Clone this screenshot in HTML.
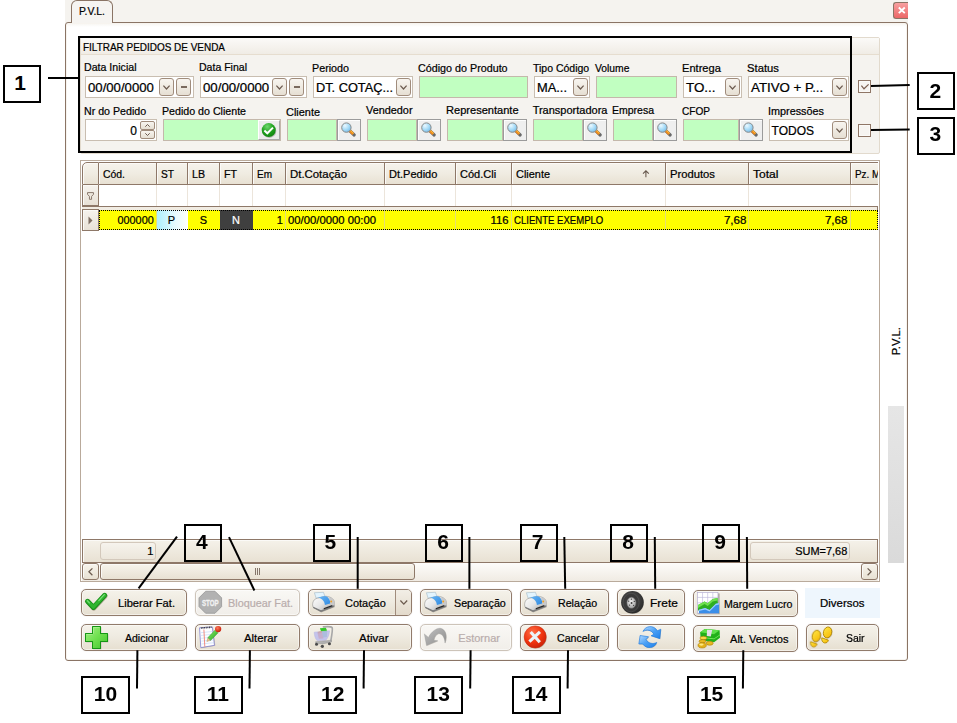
<!DOCTYPE html>
<html><head><meta charset="utf-8"><title>P.V.L.</title>
<style>

html,body{margin:0;padding:0}
body{width:957px;height:723px;position:relative;overflow:hidden;background:#fff;font-family:"Liberation Sans",sans-serif;font-size:11px;color:#000}
div{box-sizing:border-box}
.t{margin:0;padding:0;-webkit-text-stroke:.22px currentColor}
.inp{position:absolute;background:#fff;border:1px solid #c9beb1}
.grn{position:absolute;background:#c1ffc1;border:1px solid #c4b8ab}
.sb{position:absolute;border:1px solid #a08c7c;border-radius:3px;background:linear-gradient(#f8f5f0,#e6dfd3)}
.lk{position:absolute;background:#efefef;border:1px solid #9b9b9b;box-shadow:inset 1px 1px 0 #fdfdfd}
.lk2{position:absolute;background:#ececec;border:1px solid #fff;border-right-color:#a9a9a9;border-bottom-color:#a9a9a9}
.btn{position:absolute;border:1px solid #917b6b;border-radius:5px;background:linear-gradient(#f5f2ea 0%,#efebe1 45%,#e6dfd0 100%);box-shadow:inset 0 0 0 1px rgba(255,255,255,.5),0 0 1px rgba(120,100,85,.35)}
.btn.dis{border-color:#cdc4b9;background:linear-gradient(#f9f8f5,#f1eee9)}
.co{position:absolute;border:2px solid #000}
.hc{position:absolute;top:0;height:23px;border:1px solid #8e7868;border-left:none;background:linear-gradient(#f6f3ec 0%,#f0ece2 50%,#e8e1d3 100%);box-shadow:inset 1px 1px 0 #fbfaf7}
svg{position:absolute;overflow:visible}

</style></head>
<body>
<div style="position:absolute;left:65px;top:0px;width:843px;height:23px;background:#f5f3ef"></div>
<div style="position:absolute;left:65px;top:22px;width:843px;height:639px;border:1px solid #8a7465;border-radius:3px;background:linear-gradient(#f6f4f0 0px,#fff 4px);box-shadow:inset 0 0 0 1px #f7f4ef"></div>
<div style="position:absolute;left:71px;top:0px;width:42px;height:23px;border:1px solid #8a7465;border-bottom:none;border-radius:6px 6px 0 0;background:#f6f4f1"></div>
<div class="t" style="position:absolute;top:3.39px;line-height:16px;font-size:11px;white-space:pre;color:#000;left:78.65px;transform-origin:0 50%;transform:scaleX(0.9438);">P.V.L.</div>
<div style="position:absolute;left:893px;top:2px;width:16px;height:17px;border:1px solid #8a7465;border-right:none;border-radius:3px 0 0 3px;background:linear-gradient(#f7a0a0,#ec6666)"></div>
<svg style="left:897.5px;top:6.8px" width="7.6" height="6.6" viewBox="0 0 7.6 6.6"><path d="M0.8 0.5 L6.8 6.1 M6.8 0.5 L0.8 6.1" stroke="#fff" stroke-width="1.9" fill="none"/></svg>
<div style="position:absolute;left:908px;top:0px;width:49px;height:23px;background:#fff"></div>
<div style="position:absolute;left:80px;top:37px;width:800px;height:117px;background:#f5f3ef;border:1px solid #e2dacd;border-radius:2px"></div>
<div style="position:absolute;left:81px;top:38px;width:798px;height:17px;background:linear-gradient(#fbfaf8,#f0ece5);border-bottom:1px solid #e6ddcf"></div>
<div class="t" style="position:absolute;top:39.19px;line-height:16px;font-size:11px;white-space:pre;color:#000;left:83.05px;transform-origin:0 50%;transform:scaleX(0.9051);">FILTRAR PEDIDOS DE VENDA</div>
<div class="t" style="position:absolute;top:58.99px;line-height:16px;font-size:11px;white-space:pre;color:#000;left:83.85px;transform-origin:0 50%;transform:scaleX(0.9647);">Data Inicial</div>
<div class="inp" style="left:85px;top:76px;width:109px;height:22px"></div>
<div class="t" style="position:absolute;top:80.24px;line-height:16px;font-size:12px;white-space:pre;color:#000;left:88.18px;transform-origin:0 50%;transform:scaleX(1.0961);">00/00/0000</div>
<div class="sb" style="left:159px;top:78px;width:15px;height:18px"><svg style="left:3px;top:6px" width="7" height="5" viewBox="0 0 7 5"><path d="M0.4 0.6 L3.5 4 L6.6 0.6" stroke="#6b5a4e" stroke-width="1.2" fill="none"/></svg></div>
<div class="sb" style="left:176px;top:78px;width:15px;height:18px"><div style="position:absolute;left:4px;top:7px;width:6px;height:2px;background:#7a6a5e"></div></div>
<div class="t" style="position:absolute;top:58.99px;line-height:16px;font-size:11px;white-space:pre;color:#000;left:199.05px;transform-origin:0 50%;transform:scaleX(0.9573);">Data Final</div>
<div class="inp" style="left:200px;top:76px;width:107px;height:22px"></div>
<div class="t" style="position:absolute;top:80.24px;line-height:16px;font-size:12px;white-space:pre;color:#000;left:202.88px;transform-origin:0 50%;transform:scaleX(1.1028);">00/00/0000</div>
<div class="sb" style="left:272px;top:78px;width:15px;height:18px"><svg style="left:3px;top:6px" width="7" height="5" viewBox="0 0 7 5"><path d="M0.4 0.6 L3.5 4 L6.6 0.6" stroke="#6b5a4e" stroke-width="1.2" fill="none"/></svg></div>
<div class="sb" style="left:289px;top:78px;width:15px;height:18px"><div style="position:absolute;left:4px;top:7px;width:6px;height:2px;background:#7a6a5e"></div></div>
<div class="t" style="position:absolute;top:59.89px;line-height:16px;font-size:11px;white-space:pre;color:#000;left:312.25px;transform-origin:0 50%;transform:scaleX(0.9757);">Periodo</div>
<div class="inp" style="left:313px;top:76px;width:100px;height:22px"></div>
<div class="t" style="position:absolute;top:80.24px;line-height:16px;font-size:12px;white-space:pre;color:#000;left:315.68px;transform-origin:0 50%;transform:scaleX(1.0646);">DT. COTAÇ...</div>
<div class="sb" style="left:396px;top:78px;width:15px;height:18px"><svg style="left:3px;top:6px" width="7" height="5" viewBox="0 0 7 5"><path d="M0.4 0.6 L3.5 4 L6.6 0.6" stroke="#6b5a4e" stroke-width="1.2" fill="none"/></svg></div>
<div class="t" style="position:absolute;top:59.89px;line-height:16px;font-size:11px;white-space:pre;color:#000;left:418.15px;transform-origin:0 50%;transform:scaleX(0.9767);">Código do Produto</div>
<div class="grn" style="left:419px;top:76px;width:109px;height:22px"></div>
<div class="t" style="position:absolute;top:59.89px;line-height:16px;font-size:11px;white-space:pre;color:#000;left:533.45px;transform-origin:0 50%;transform:scaleX(0.9541);">Tipo Código</div>
<div class="inp" style="left:534px;top:76px;width:56px;height:22px"></div>
<div class="t" style="position:absolute;top:80.24px;line-height:16px;font-size:12px;white-space:pre;color:#000;left:536.78px;transform-origin:0 50%;transform:scaleX(1.0721);">MA...</div>
<div class="sb" style="left:573px;top:78px;width:15px;height:18px"><svg style="left:3px;top:6px" width="7" height="5" viewBox="0 0 7 5"><path d="M0.4 0.6 L3.5 4 L6.6 0.6" stroke="#6b5a4e" stroke-width="1.2" fill="none"/></svg></div>
<div class="t" style="position:absolute;top:59.89px;line-height:16px;font-size:11px;white-space:pre;color:#000;left:595.35px;transform-origin:0 50%;transform:scaleX(0.9372);">Volume</div>
<div class="grn" style="left:596px;top:76px;width:81px;height:22px"></div>
<div class="t" style="position:absolute;top:59.89px;line-height:16px;font-size:11px;white-space:pre;color:#000;left:681.85px;transform-origin:0 50%;transform:scaleX(1.0070);">Entrega</div>
<div class="inp" style="left:683px;top:76px;width:59px;height:22px"></div>
<div class="t" style="position:absolute;top:80.24px;line-height:16px;font-size:12px;white-space:pre;color:#000;left:685.58px;transform-origin:0 50%;transform:scaleX(1.1166);">TO...</div>
<div class="sb" style="left:725px;top:78px;width:15px;height:18px"><svg style="left:3px;top:6px" width="7" height="5" viewBox="0 0 7 5"><path d="M0.4 0.6 L3.5 4 L6.6 0.6" stroke="#6b5a4e" stroke-width="1.2" fill="none"/></svg></div>
<div class="t" style="position:absolute;top:59.89px;line-height:16px;font-size:11px;white-space:pre;color:#000;left:747.05px;transform-origin:0 50%;transform:scaleX(1.0228);">Status</div>
<div class="inp" style="left:748px;top:76px;width:101px;height:22px"></div>
<div class="t" style="position:absolute;top:80.24px;line-height:16px;font-size:12px;white-space:pre;color:#000;left:750.88px;transform-origin:0 50%;transform:scaleX(1.1071);">ATIVO + P...</div>
<div class="sb" style="left:832px;top:78px;width:15px;height:18px"><svg style="left:3px;top:6px" width="7" height="5" viewBox="0 0 7 5"><path d="M0.4 0.6 L3.5 4 L6.6 0.6" stroke="#6b5a4e" stroke-width="1.2" fill="none"/></svg></div>
<div class="t" style="position:absolute;top:102.99px;line-height:16px;font-size:11px;white-space:pre;color:#000;left:83.85px;transform-origin:0 50%;transform:scaleX(0.9670);">Nr do Pedido</div>
<div class="inp" style="left:85px;top:119px;width:72px;height:22px"></div>
<div class="t" style="position:absolute;top:123.04px;line-height:16px;font-size:12px;white-space:pre;color:#000;right:819.98px;transform-origin:100% 50%;">0</div>
<div class="sb" style="left:140px;top:121px;width:15px;height:9px;border-radius:2px"><svg style="left:4px;top:2px" width="5" height="3" viewBox="0 0 5 3"><path d="M0.3 2.7 L2.5 0.5 L4.7 2.7" stroke="#6b5a4e" stroke-width="1" fill="none"/></svg></div>
<div class="sb" style="left:140px;top:130px;width:15px;height:9px;border-radius:2px"><svg style="left:4px;top:2px" width="5" height="3" viewBox="0 0 5 3"><path d="M0.3 0.3 L2.5 2.5 L4.7 0.3" stroke="#6b5a4e" stroke-width="1" fill="none"/></svg></div>
<div class="t" style="position:absolute;top:102.99px;line-height:16px;font-size:11px;white-space:pre;color:#000;left:161.95px;transform-origin:0 50%;transform:scaleX(0.9673);">Pedido do Cliente</div>
<div class="grn" style="left:163px;top:119px;width:118px;height:22px"></div>
<div class="lk2" style="left:258px;top:120px;width:22px;height:20px"><svg style="left:1.5px;top:0.5px" width="16" height="17" viewBox="0 0 16 17"><defs><radialGradient id="gk" cx="40%" cy="25%" r="80%"><stop offset="0" stop-color="#6fd86f"/><stop offset=".5" stop-color="#22a422"/><stop offset="1" stop-color="#0e820e"/></radialGradient></defs><circle cx="8.3" cy="8.9" r="7" fill="#777" opacity=".45"/><circle cx="7.7" cy="8.1" r="7" fill="url(#gk)"/><path d="M3.4 8.6 L6.3 11.3 L12 5.6" stroke="#fff" stroke-width="2" fill="none" stroke-linejoin="miter"/></svg></div>
<div class="t" style="position:absolute;top:104.09px;line-height:16px;font-size:11px;white-space:pre;color:#000;left:286.25px;transform-origin:0 50%;transform:scaleX(0.9927);">Cliente</div>
<div class="grn" style="left:287px;top:119px;width:50px;height:22px"></div>
<div class="lk" style="left:337px;top:119px;width:24px;height:22px"><svg style="left:3px;top:2px" width="17" height="17" viewBox="0 0 17 17"><defs><radialGradient id="mg" cx="35%" cy="30%" r="75%"><stop offset="0" stop-color="#eaf8ff"/><stop offset=".55" stop-color="#a8dcf8"/><stop offset="1" stop-color="#78bce8"/></radialGradient></defs><path d="M8.6 8.6 L13.2 13" stroke="#6a6a6a" stroke-width="3.2" stroke-linecap="round"/><path d="M8.3 8.3 L12.2 12" stroke="#f08a1c" stroke-width="2.6"/><path d="M8.9 7.8 L12.6 11.4" stroke="#ffd24a" stroke-width=".8"/><circle cx="5.4" cy="5.6" r="4.7" fill="url(#mg)" stroke="#8a8a8a" stroke-width="1"/></svg></div>
<div class="t" style="position:absolute;top:102.09px;line-height:16px;font-size:11px;white-space:pre;color:#000;left:366.25px;transform-origin:0 50%;transform:scaleX(0.9871);">Vendedor</div>
<div class="grn" style="left:367px;top:119px;width:50px;height:22px"></div>
<div class="lk" style="left:417px;top:119px;width:24px;height:22px"><svg style="left:3px;top:2px" width="17" height="17" viewBox="0 0 17 17"><defs><radialGradient id="mg" cx="35%" cy="30%" r="75%"><stop offset="0" stop-color="#eaf8ff"/><stop offset=".55" stop-color="#a8dcf8"/><stop offset="1" stop-color="#78bce8"/></radialGradient></defs><path d="M8.6 8.6 L13.2 13" stroke="#6a6a6a" stroke-width="3.2" stroke-linecap="round"/><path d="M8.3 8.3 L12.2 12" stroke="#f08a1c" stroke-width="2.6"/><path d="M8.9 7.8 L12.6 11.4" stroke="#ffd24a" stroke-width=".8"/><circle cx="5.4" cy="5.6" r="4.7" fill="url(#mg)" stroke="#8a8a8a" stroke-width="1"/></svg></div>
<div class="t" style="position:absolute;top:102.09px;line-height:16px;font-size:11px;white-space:pre;color:#000;left:446.05px;transform-origin:0 50%;transform:scaleX(1.0059);">Representante</div>
<div class="grn" style="left:447px;top:119px;width:56px;height:22px"></div>
<div class="lk" style="left:503px;top:119px;width:24px;height:22px"><svg style="left:3px;top:2px" width="17" height="17" viewBox="0 0 17 17"><defs><radialGradient id="mg" cx="35%" cy="30%" r="75%"><stop offset="0" stop-color="#eaf8ff"/><stop offset=".55" stop-color="#a8dcf8"/><stop offset="1" stop-color="#78bce8"/></radialGradient></defs><path d="M8.6 8.6 L13.2 13" stroke="#6a6a6a" stroke-width="3.2" stroke-linecap="round"/><path d="M8.3 8.3 L12.2 12" stroke="#f08a1c" stroke-width="2.6"/><path d="M8.9 7.8 L12.6 11.4" stroke="#ffd24a" stroke-width=".8"/><circle cx="5.4" cy="5.6" r="4.7" fill="url(#mg)" stroke="#8a8a8a" stroke-width="1"/></svg></div>
<div class="t" style="position:absolute;top:102.09px;line-height:16px;font-size:11px;white-space:pre;color:#000;left:532.65px;transform-origin:0 50%;">Transportadora</div>
<div class="grn" style="left:533px;top:119px;width:50px;height:22px"></div>
<div class="lk" style="left:583px;top:119px;width:24px;height:22px"><svg style="left:3px;top:2px" width="17" height="17" viewBox="0 0 17 17"><defs><radialGradient id="mg" cx="35%" cy="30%" r="75%"><stop offset="0" stop-color="#eaf8ff"/><stop offset=".55" stop-color="#a8dcf8"/><stop offset="1" stop-color="#78bce8"/></radialGradient></defs><path d="M8.6 8.6 L13.2 13" stroke="#6a6a6a" stroke-width="3.2" stroke-linecap="round"/><path d="M8.3 8.3 L12.2 12" stroke="#f08a1c" stroke-width="2.6"/><path d="M8.9 7.8 L12.6 11.4" stroke="#ffd24a" stroke-width=".8"/><circle cx="5.4" cy="5.6" r="4.7" fill="url(#mg)" stroke="#8a8a8a" stroke-width="1"/></svg></div>
<div class="t" style="position:absolute;top:102.09px;line-height:16px;font-size:11px;white-space:pre;color:#000;left:612.05px;transform-origin:0 50%;transform:scaleX(0.9539);">Empresa</div>
<div class="grn" style="left:613px;top:119px;width:40px;height:22px"></div>
<div class="lk" style="left:653px;top:119px;width:24px;height:22px"><svg style="left:3px;top:2px" width="17" height="17" viewBox="0 0 17 17"><defs><radialGradient id="mg" cx="35%" cy="30%" r="75%"><stop offset="0" stop-color="#eaf8ff"/><stop offset=".55" stop-color="#a8dcf8"/><stop offset="1" stop-color="#78bce8"/></radialGradient></defs><path d="M8.6 8.6 L13.2 13" stroke="#6a6a6a" stroke-width="3.2" stroke-linecap="round"/><path d="M8.3 8.3 L12.2 12" stroke="#f08a1c" stroke-width="2.6"/><path d="M8.9 7.8 L12.6 11.4" stroke="#ffd24a" stroke-width=".8"/><circle cx="5.4" cy="5.6" r="4.7" fill="url(#mg)" stroke="#8a8a8a" stroke-width="1"/></svg></div>
<div class="t" style="position:absolute;top:102.99px;line-height:16px;font-size:11px;white-space:pre;color:#000;left:682.15px;transform-origin:0 50%;transform:scaleX(0.9162);">CFOP</div>
<div class="grn" style="left:683px;top:119px;width:56px;height:22px"></div>
<div class="lk" style="left:739px;top:119px;width:24px;height:22px"><svg style="left:3px;top:2px" width="17" height="17" viewBox="0 0 17 17"><defs><radialGradient id="mg" cx="35%" cy="30%" r="75%"><stop offset="0" stop-color="#eaf8ff"/><stop offset=".55" stop-color="#a8dcf8"/><stop offset="1" stop-color="#78bce8"/></radialGradient></defs><path d="M8.6 8.6 L13.2 13" stroke="#6a6a6a" stroke-width="3.2" stroke-linecap="round"/><path d="M8.3 8.3 L12.2 12" stroke="#f08a1c" stroke-width="2.6"/><path d="M8.9 7.8 L12.6 11.4" stroke="#ffd24a" stroke-width=".8"/><circle cx="5.4" cy="5.6" r="4.7" fill="url(#mg)" stroke="#8a8a8a" stroke-width="1"/></svg></div>
<div class="t" style="position:absolute;top:102.99px;line-height:16px;font-size:11px;white-space:pre;color:#000;left:768.25px;transform-origin:0 50%;transform:scaleX(0.9831);">Impressões</div>
<div class="inp" style="left:769px;top:119px;width:80px;height:22px"></div>
<div class="t" style="position:absolute;top:123.04px;line-height:16px;font-size:12px;white-space:pre;color:#000;left:771.58px;transform-origin:0 50%;">TODOS</div>
<div class="sb" style="left:832px;top:121px;width:15px;height:18px"><svg style="left:3px;top:6px" width="7" height="5" viewBox="0 0 7 5"><path d="M0.4 0.6 L3.5 4 L6.6 0.6" stroke="#6b5a4e" stroke-width="1.2" fill="none"/></svg></div>
<div style="position:absolute;left:858px;top:80px;width:13px;height:13px;border:1px solid #8f7666;background:#f6f4f1;box-shadow:inset 0 0 0 1px #fbfaf8"><svg style="left:2px;top:3px" width="8" height="6" viewBox="0 0 8 6"><path d="M0.4 1.6 L3 4.8 L7.6 0.4" stroke="#7b5e50" stroke-width="1.2" fill="none"/></svg></div>
<div style="position:absolute;left:858px;top:124px;width:13px;height:13px;border:1px solid #8f7666;background:#f6f4f1;box-shadow:inset 0 0 0 1px #fbfaf8"></div>
<div style="position:absolute;left:78px;top:36px;width:774px;height:117px;border:2px solid #000"></div>
<div style="position:absolute;left:80px;top:160px;width:800px;height:422px;border:1px solid #b9aa9b;background:#fff"></div>
<div style="position:absolute;left:82px;top:162px;width:796px;height:418px;overflow:hidden"><div class="hc" style="left:0;width:17px;border-radius:5px 0 0 0;border-left:1px solid #8e7868"></div><div class="hc" style="left:17px;width:58px"></div><div class="hc" style="left:75px;width:31px"></div><div class="hc" style="left:106px;width:32px"></div><div class="hc" style="left:138px;width:33px"></div><div class="hc" style="left:171px;width:33px"></div><div class="hc" style="left:204px;width:99px"></div><div class="hc" style="left:303px;width:71px"></div><div class="hc" style="left:374px;width:56px"></div><div class="hc" style="left:430px;width:154px"></div><div class="hc" style="left:584px;width:83px"></div><div class="hc" style="left:667px;width:102px"></div><div class="hc" style="left:769px;width:49px"></div><div style="position:absolute;left:0;top:23px;width:17px;height:21px;border:1px solid #8e7868;border-top:none;background:linear-gradient(#f6f3ee,#e8e1d6);box-shadow:inset 1px 1px 0 #fbfaf7"><svg style="left:4px;top:7px" width="7" height="8" viewBox="0 0 8 9"><path d="M0.6 0.6 H7.4 V2.6 L5.2 5 V8.3 H2.8 V5 L0.6 2.6 Z" fill="#ece6dc" stroke="#857569" stroke-width="1.1"/></svg></div><div style="position:absolute;left:74px;top:23px;width:1px;height:21px;background:#ece5db"></div><div style="position:absolute;left:105px;top:23px;width:1px;height:21px;background:#ece5db"></div><div style="position:absolute;left:137px;top:23px;width:1px;height:21px;background:#ece5db"></div><div style="position:absolute;left:170px;top:23px;width:1px;height:21px;background:#ece5db"></div><div style="position:absolute;left:203px;top:23px;width:1px;height:21px;background:#ece5db"></div><div style="position:absolute;left:302px;top:23px;width:1px;height:21px;background:#ece5db"></div><div style="position:absolute;left:373px;top:23px;width:1px;height:21px;background:#ece5db"></div><div style="position:absolute;left:429px;top:23px;width:1px;height:21px;background:#ece5db"></div><div style="position:absolute;left:583px;top:23px;width:1px;height:21px;background:#ece5db"></div><div style="position:absolute;left:666px;top:23px;width:1px;height:21px;background:#ece5db"></div><div style="position:absolute;left:768px;top:23px;width:1px;height:21px;background:#ece5db"></div><div style="position:absolute;left:817px;top:23px;width:1px;height:21px;background:#ece5db"></div><div style="position:absolute;left:0;top:44px;width:796px;height:4px;background:#f1ece3;border-top:1px solid #8e7868;border-right:1px solid #8e7868"></div><div style="position:absolute;left:0;top:47px;width:17px;height:22px;border:1px solid #8e7868;background:linear-gradient(#f6f3ee,#e8e1d6);box-shadow:inset 1px 1px 0 #fbfaf7"><svg style="left:5px;top:6px" width="5" height="9" viewBox="0 0 5 9"><path d="M0.5 0.5 L4.5 4.5 L0.5 8.5 Z" fill="#7f6f63"/></svg></div><div style="position:absolute;left:17px;top:48px;width:779px;height:20px;background:#ff0"></div><div style="position:absolute;left:75px;top:48px;width:31px;height:20px;background:linear-gradient(90deg,#aef0ff 0%,#e8fbff 60%,#fff 100%)"></div><div style="position:absolute;left:138px;top:48px;width:33px;height:20px;background:#3f3f3f"></div><div style="position:absolute;left:74px;top:48px;width:1px;height:20px;background:#e6e070"></div><div style="position:absolute;left:203px;top:48px;width:1px;height:20px;background:#e6e070"></div><div style="position:absolute;left:302px;top:48px;width:1px;height:20px;background:#e6e070"></div><div style="position:absolute;left:373px;top:48px;width:1px;height:20px;background:#e6e070"></div><div style="position:absolute;left:429px;top:48px;width:1px;height:20px;background:#e6e070"></div><div style="position:absolute;left:583px;top:48px;width:1px;height:20px;background:#e6e070"></div><div style="position:absolute;left:666px;top:48px;width:1px;height:20px;background:#e6e070"></div><div style="position:absolute;left:768px;top:48px;width:1px;height:20px;background:#e6e070"></div><div style="position:absolute;left:817px;top:48px;width:1px;height:20px;background:#e6e070"></div><div style="position:absolute;left:17px;top:48px;width:779px;height:20px;border:1px dotted #000"></div></div>
<div class="t" style="position:absolute;top:166.19px;line-height:16px;font-size:11px;white-space:pre;color:#000;left:103.05px;transform-origin:0 50%;transform:scaleX(0.9462);">Cód.</div>
<div class="t" style="position:absolute;top:166.19px;line-height:16px;font-size:11px;white-space:pre;color:#000;left:161.05px;transform-origin:0 50%;transform:scaleX(0.9244);">ST</div>
<div class="t" style="position:absolute;top:166.19px;line-height:16px;font-size:11px;white-space:pre;color:#000;left:192.05px;transform-origin:0 50%;transform:scaleX(0.9652);">LB</div>
<div class="t" style="position:absolute;top:166.19px;line-height:16px;font-size:11px;white-space:pre;color:#000;left:224.05px;transform-origin:0 50%;transform:scaleX(0.9663);">FT</div>
<div class="t" style="position:absolute;top:166.19px;line-height:16px;font-size:11px;white-space:pre;color:#000;left:257.05px;transform-origin:0 50%;transform:scaleX(0.9091);">Em</div>
<div class="t" style="position:absolute;top:166.19px;line-height:16px;font-size:11px;white-space:pre;color:#000;left:290.05px;transform-origin:0 50%;transform:scaleX(1.0358);">Dt.Cotação</div>
<div class="t" style="position:absolute;top:166.19px;line-height:16px;font-size:11px;white-space:pre;color:#000;left:389.05px;transform-origin:0 50%;">Dt.Pedido</div>
<div class="t" style="position:absolute;top:166.19px;line-height:16px;font-size:11px;white-space:pre;color:#000;left:460.05px;transform-origin:0 50%;">Cód.Cli</div>
<div class="t" style="position:absolute;top:166.19px;line-height:16px;font-size:11px;white-space:pre;color:#000;left:516.05px;transform-origin:0 50%;transform:scaleX(0.9927);">Cliente</div>
<div class="t" style="position:absolute;top:166.19px;line-height:16px;font-size:11px;white-space:pre;color:#000;left:670.05px;transform-origin:0 50%;transform:scaleX(1.0220);">Produtos</div>
<div class="t" style="position:absolute;top:166.19px;line-height:16px;font-size:11px;white-space:pre;color:#000;left:753.05px;transform-origin:0 50%;transform:scaleX(1.0968);">Total</div>
<div style="position:absolute;left:851px;top:162px;width:27px;height:23px;overflow:hidden"><div class="t" style="position:absolute;left:4px;top:4.19px;line-height:16px;white-space:pre;transform-origin:0 50%;transform:scaleX(.9)">Pz. M</div></div>
<svg style="left:642px;top:170px" width="8" height="8" viewBox="0 0 8 8"><path d="M3.9 0.8 V7.3 M1 3.6 L3.9 0.8 L6.8 3.6" stroke="#65564b" stroke-width="1.05" fill="none"/></svg>
<div class="t" style="position:absolute;top:212.19px;line-height:16px;font-size:11px;white-space:pre;color:#000;right:803.55px;transform-origin:100% 50%;transform:scaleX(0.9859);">000000</div>
<div class="t" style="position:absolute;top:212.19px;line-height:16px;font-size:11px;white-space:pre;color:#000;left:167.83px;transform-origin:50% 50%;">P</div>
<div class="t" style="position:absolute;top:212.19px;line-height:16px;font-size:11px;white-space:pre;color:#000;left:199.63px;transform-origin:50% 50%;">S</div>
<div class="t" style="position:absolute;top:212.19px;line-height:16px;font-size:11px;white-space:pre;color:#fff;left:232.02px;transform-origin:50% 50%;">N</div>
<div class="t" style="position:absolute;top:212.19px;line-height:16px;font-size:11px;white-space:pre;color:#000;right:674.25px;transform-origin:100% 50%;">1</div>
<div class="t" style="position:absolute;top:212.19px;line-height:16px;font-size:11px;white-space:pre;color:#000;left:288.05px;transform-origin:0 50%;transform:scaleX(1.0275);">00/00/0000 00:00</div>
<div class="t" style="position:absolute;top:212.19px;line-height:16px;font-size:11px;white-space:pre;color:#000;right:448.55px;transform-origin:100% 50%;transform:scaleX(1.0258);">116</div>
<div class="t" style="position:absolute;top:212.19px;line-height:16px;font-size:11px;white-space:pre;color:#000;left:514.25px;transform-origin:0 50%;transform:scaleX(0.8695);">CLIENTE EXEMPLO</div>
<div class="t" style="position:absolute;top:212.19px;line-height:16px;font-size:11px;white-space:pre;color:#000;right:210.95px;transform-origin:100% 50%;transform:scaleX(1.0503);">7,68</div>
<div class="t" style="position:absolute;top:212.19px;line-height:16px;font-size:11px;white-space:pre;color:#000;right:109.45px;transform-origin:100% 50%;transform:scaleX(1.0503);">7,68</div>
<div style="position:absolute;left:82px;top:539px;width:796px;height:24px;border:1px solid #8e7868;background:linear-gradient(#f5f2ea,#e8e1d3);box-shadow:inset 1px 1px 0 #fbfaf7"></div>
<div style="position:absolute;left:100px;top:542px;width:56px;height:18px;border:1px solid #d3c8bb;border-radius:3px;background:linear-gradient(#f6f3ed,#ece6db)"></div>
<div class="t" style="position:absolute;top:543.29px;line-height:16px;font-size:11px;white-space:pre;color:#000;right:803.75px;transform-origin:100% 50%;">1</div>
<div style="position:absolute;left:750px;top:542px;width:100px;height:18px;border:1px solid #d3c8bb;border-radius:3px;background:linear-gradient(#f6f3ed,#ece6db)"></div>
<div class="t" style="position:absolute;top:543.29px;line-height:16px;font-size:11px;white-space:pre;color:#000;right:109.85px;transform-origin:100% 50%;transform:scaleX(0.9946);">SUM=7,68</div>
<div style="position:absolute;left:82px;top:563px;width:796px;height:18px;background:linear-gradient(#fdfcfa,#f0ebe3)"></div>
<div style="position:absolute;left:82px;top:563px;width:17px;height:17px;border:1px solid #8e7868;border-radius:3px;background:linear-gradient(#f7f4ec,#e8e1d3);box-shadow:inset 1px 1px 0 #fbfaf7"><svg style="left:5px;top:4px" width="5" height="8" viewBox="0 0 5 8"><path d="M4.4 0.4 L0.9 3.8 L4.4 7.2" stroke="#6b5a4e" stroke-width="1.2" fill="none"/></svg></div>
<div style="position:absolute;left:861px;top:563px;width:17px;height:17px;border:1px solid #8e7868;border-radius:3px;background:linear-gradient(#f7f4ec,#e8e1d3);box-shadow:inset 1px 1px 0 #fbfaf7"><svg style="left:5px;top:4px" width="5" height="8" viewBox="0 0 5 8"><path d="M0.6 0.4 L4.1 3.8 L0.6 7.2" stroke="#6b5a4e" stroke-width="1.2" fill="none"/></svg></div>
<div style="position:absolute;left:100px;top:563px;width:315px;height:17px;border:1px solid #8e7868;border-radius:3px;background:linear-gradient(#f7f4ec,#e8e1d3);box-shadow:inset 1px 1px 0 #fbfaf7"><div style="position:absolute;left:154px;top:4px;width:1px;height:7px;background:#85766b;box-shadow:2px 0 0 #85766b,4px 0 0 #85766b"></div></div>
<div class="t" style="position:absolute;left:882.8px;top:334.3px;width:26px;height:16px;line-height:16px;text-align:center;white-space:pre;transform:rotate(-90deg) scaleX(1.02)">P.V.L.</div>
<div style="position:absolute;left:888px;top:406px;width:16px;height:157px;background:linear-gradient(#e6e6e6,#dadada)"></div>
<div class="btn" style="left:81px;top:589px;width:106px;height:27px"></div>
<svg style="left:80px;top:588px" width="60" height="30" viewBox="0 0 957 478"><defs></defs><path d="M128 222 L222 322 L402 128" stroke="#6a5a40" stroke-opacity=".45" stroke-width="78" fill="none" stroke-linecap="round" stroke-linejoin="round"/><path d="M120 212 L214 310 L394 116" stroke="#1a8f1a" stroke-width="80" fill="none" stroke-linecap="round" stroke-linejoin="round"/><path d="M120 210 L214 306 L394 114" stroke="#2fb52f" stroke-width="52" fill="none" stroke-linecap="round" stroke-linejoin="round"/><path d="M116 200 L150 236 M300 200 L388 104" stroke="#7be07b" stroke-width="18" fill="none" stroke-linecap="round"/></svg>
<div class="t" style="position:absolute;top:595.19px;line-height:16px;font-size:11px;white-space:pre;color:#000;left:118.05px;transform-origin:0 50%;transform:scaleX(1.0133);">Liberar Fat.</div>
<div class="btn dis" style="left:195px;top:589px;width:105px;height:27px"></div>
<svg style="left:194px;top:588px" width="60" height="30" viewBox="0 0 957 478"><defs></defs><path d="M185 52 L335 52 L440 157 L440 297 L335 402 L185 402 L80 297 L80 157 Z" fill="#b2b2b2" stroke="#9c9c9c" stroke-width="14"/><text x="260" y="279" font-family="Liberation Sans, sans-serif" font-weight="bold" font-size="146" fill="#f2f2f2" stroke="#f2f2f2" stroke-width="5" text-anchor="middle" textLength="266" lengthAdjust="spacingAndGlyphs">STOP</text></svg>
<div class="t" style="position:absolute;top:595.19px;line-height:16px;font-size:11px;white-space:pre;color:#b9adac;left:227.55px;transform-origin:0 50%;transform:scaleX(0.9841);">Bloquear Fat.</div>
<div class="btn" style="left:308px;top:589px;width:104px;height:27px"></div>
<svg style="left:307px;top:588px" width="60" height="30" viewBox="0 0 957 478"><defs><linearGradient id="pb" x1="0" y1="0" x2="1" y2=".8"><stop offset="0" stop-color="#ffffff"/><stop offset=".5" stop-color="#e6e6e6"/><stop offset="1" stop-color="#a8a8a8"/></linearGradient><linearGradient id="pbl" x1="0" y1="0" x2="1" y2="1"><stop offset="0" stop-color="#6ab6f4"/><stop offset="1" stop-color="#2f8ae2"/></linearGradient></defs><path d="M108 318 L226 392 L440 306 L440 286 L226 366 L100 300 Z" fill="#6a6258" opacity=".4"/>
<path d="M118 76 L262 68 L286 132 L146 162 Z" fill="#e2f4fe" stroke="#9fb4c2" stroke-width="9" stroke-linejoin="round"/>
<path d="M89 266 C92 200 120 168 190 158 L300 132 C370 136 425 170 434 214 L434 292 L224 372 L96 306 Z" fill="url(#pb)" stroke="#8c8c8c" stroke-width="9" stroke-linejoin="round"/>
<path d="M350 152 C400 160 430 188 434 214 L434 276 L372 300 C375 240 368 190 350 152 Z" fill="#c9c9c9"/>
<path d="M176 150 L286 126 C325 130 352 160 368 210 L368 248 L286 270 C280 215 250 172 176 150 Z" fill="url(#pbl)"/>
<path d="M100 300 L224 356 L434 276 L434 300 L224 384 L98 318 Z" fill="#7c7c7c"/>
<path d="M262 322 L402 272 L408 290 L274 340 Z" fill="#262626"/>
<circle cx="386" cy="216" r="15" fill="#f5a21e"/></svg>
<div class="t" style="position:absolute;top:595.19px;line-height:16px;font-size:11px;white-space:pre;color:#000;left:344.65px;transform-origin:0 50%;transform:scaleX(0.9955);">Cotação</div>
<div style="position:absolute;left:395px;top:590px;width:1px;height:25px;background:#a08c7c"></div><div style="position:absolute;left:396px;top:590px;width:15px;height:25px;border-radius:0 4px 4px 0;background:linear-gradient(#f2eee6,#e3dacb)"></div><svg style="left:399.6px;top:600px" width="7.6" height="5" viewBox="0 0 7.6 5"><path d="M0.4 0.5 L3.8 4.2 L7.2 0.5" stroke="#6b5a4e" stroke-width="1.25" fill="none"/></svg>
<div class="btn" style="left:420px;top:589px;width:92px;height:27px"></div>
<svg style="left:419px;top:588px" width="60" height="30" viewBox="0 0 957 478"><defs><linearGradient id="pb" x1="0" y1="0" x2="1" y2=".8"><stop offset="0" stop-color="#ffffff"/><stop offset=".5" stop-color="#e6e6e6"/><stop offset="1" stop-color="#a8a8a8"/></linearGradient><linearGradient id="pbl" x1="0" y1="0" x2="1" y2="1"><stop offset="0" stop-color="#6ab6f4"/><stop offset="1" stop-color="#2f8ae2"/></linearGradient></defs><path d="M108 318 L226 392 L440 306 L440 286 L226 366 L100 300 Z" fill="#6a6258" opacity=".4"/>
<path d="M118 76 L262 68 L286 132 L146 162 Z" fill="#e2f4fe" stroke="#9fb4c2" stroke-width="9" stroke-linejoin="round"/>
<path d="M89 266 C92 200 120 168 190 158 L300 132 C370 136 425 170 434 214 L434 292 L224 372 L96 306 Z" fill="url(#pb)" stroke="#8c8c8c" stroke-width="9" stroke-linejoin="round"/>
<path d="M350 152 C400 160 430 188 434 214 L434 276 L372 300 C375 240 368 190 350 152 Z" fill="#c9c9c9"/>
<path d="M176 150 L286 126 C325 130 352 160 368 210 L368 248 L286 270 C280 215 250 172 176 150 Z" fill="url(#pbl)"/>
<path d="M100 300 L224 356 L434 276 L434 300 L224 384 L98 318 Z" fill="#7c7c7c"/>
<path d="M262 322 L402 272 L408 290 L274 340 Z" fill="#262626"/>
<circle cx="386" cy="216" r="15" fill="#f5a21e"/></svg>
<div class="t" style="position:absolute;top:595.19px;line-height:16px;font-size:11px;white-space:pre;color:#000;left:453.65px;transform-origin:0 50%;transform:scaleX(0.9733);">Separação</div>
<div class="btn" style="left:520px;top:589px;width:89px;height:27px"></div>
<svg style="left:519px;top:588px" width="60" height="30" viewBox="0 0 957 478"><defs><linearGradient id="pb" x1="0" y1="0" x2="1" y2=".8"><stop offset="0" stop-color="#ffffff"/><stop offset=".5" stop-color="#e6e6e6"/><stop offset="1" stop-color="#a8a8a8"/></linearGradient><linearGradient id="pbl" x1="0" y1="0" x2="1" y2="1"><stop offset="0" stop-color="#6ab6f4"/><stop offset="1" stop-color="#2f8ae2"/></linearGradient></defs><path d="M108 318 L226 392 L440 306 L440 286 L226 366 L100 300 Z" fill="#6a6258" opacity=".4"/>
<path d="M118 76 L262 68 L286 132 L146 162 Z" fill="#e2f4fe" stroke="#9fb4c2" stroke-width="9" stroke-linejoin="round"/>
<path d="M89 266 C92 200 120 168 190 158 L300 132 C370 136 425 170 434 214 L434 292 L224 372 L96 306 Z" fill="url(#pb)" stroke="#8c8c8c" stroke-width="9" stroke-linejoin="round"/>
<path d="M350 152 C400 160 430 188 434 214 L434 276 L372 300 C375 240 368 190 350 152 Z" fill="#c9c9c9"/>
<path d="M176 150 L286 126 C325 130 352 160 368 210 L368 248 L286 270 C280 215 250 172 176 150 Z" fill="url(#pbl)"/>
<path d="M100 300 L224 356 L434 276 L434 300 L224 384 L98 318 Z" fill="#7c7c7c"/>
<path d="M262 322 L402 272 L408 290 L274 340 Z" fill="#262626"/>
<circle cx="386" cy="216" r="15" fill="#f5a21e"/></svg>
<div class="t" style="position:absolute;top:595.19px;line-height:16px;font-size:11px;white-space:pre;color:#000;left:558.35px;transform-origin:0 50%;transform:scaleX(0.9688);">Relação</div>
<div class="btn" style="left:617px;top:589px;width:68px;height:27px"></div>
<svg style="left:616px;top:588px" width="60" height="30" viewBox="0 0 957 478"><defs><radialGradient id="tg" cx="45%" cy="40%" r="60%"><stop offset="0" stop-color="#5a5a5a"/><stop offset="1" stop-color="#2a2a2a"/></radialGradient><radialGradient id="hg" cx="45%" cy="40%" r="65%"><stop offset="0" stop-color="#f2f2f2"/><stop offset="1" stop-color="#9a9a9a"/></radialGradient></defs><ellipse cx="268" cy="236" rx="178" ry="178" fill="#6a6258" opacity=".35"/><ellipse cx="262" cy="226" rx="180" ry="180" fill="url(#tg)"/><ellipse cx="240" cy="232" rx="128" ry="148" fill="#3a3a3a" stroke="#5e5e5e" stroke-width="8"/><ellipse cx="246" cy="236" rx="72" ry="88" fill="url(#hg)" stroke="#777" stroke-width="8"/><g fill="#3c3c3c"><circle cx="246" cy="178" r="10"/><circle cx="202" cy="210" r="10"/><circle cx="292" cy="214" r="10"/><circle cx="216" cy="272" r="10"/><circle cx="280" cy="275" r="10"/><circle cx="248" cy="238" r="15"/></g></svg>
<div class="t" style="position:absolute;top:595.19px;line-height:16px;font-size:11px;white-space:pre;color:#000;left:650.05px;transform-origin:0 50%;transform:scaleX(1.0861);">Frete</div>
<div class="btn" style="left:693px;top:590px;width:105px;height:27px"></div>
<svg style="left:692px;top:588px" width="60" height="30" viewBox="0 0 957 478"><defs></defs><rect x="102" y="86" width="340" height="330" fill="#5a5448" opacity=".4"/><rect x="88" y="72" width="326" height="330" fill="#fff" stroke="#a8a0cc" stroke-width="9"/><path d="M168 72 V400 M250 72 V400 M332 72 V400 M88 150 H414 M88 235 H414" stroke="#b8b0d8" stroke-width="9" fill="none"/><path d="M96 272 L200 214 L250 242 L330 176 L408 160 L414 260 L414 360 L96 360 Z" fill="#2fae22"/><path d="M96 272 L200 214 L250 242 L330 176 L408 160 L408 200 L330 215 L250 285 L200 255 L96 318 Z" fill="#6fe04f"/><path d="M110 345 L210 318 L280 352 L380 252 L432 240 L432 402 L110 402 Z" fill="#3b8ee8"/><path d="M110 345 L210 318 L280 352 L380 252 L432 240 L432 262 L380 276 L280 376 L210 342 L110 368 Z" fill="#9fd0ff"/></svg>
<div class="t" style="position:absolute;top:596.19px;line-height:16px;font-size:11px;white-space:pre;color:#000;left:724.15px;transform-origin:0 50%;transform:scaleX(0.9644);">Margem Lucro</div>
<div style="position:absolute;left:805px;top:588px;width:75px;height:30px;background:#eef6fd"></div>
<div class="t" style="position:absolute;top:595.19px;line-height:16px;font-size:11px;white-space:pre;color:#000;left:819.85px;transform-origin:0 50%;transform:scaleX(1.0398);">Diversos</div>
<div class="btn" style="left:81px;top:624px;width:106px;height:27px"></div>
<svg style="left:80px;top:622px" width="60" height="30" viewBox="0 0 957 478"><defs><linearGradient id="pg" x1="0" y1="0" x2="1" y2="1"><stop offset="0" stop-color="#a6f088"/><stop offset=".5" stop-color="#6fe04f"/><stop offset="1" stop-color="#42c42e"/></linearGradient></defs><path d="M211 84 H339 V195 H451 V323 H339 V435 H211 V323 H100 V195 H211 Z" fill="#4a3a28" opacity=".4"/><path d="M199.4 71.8 H327 V183.4 H438.6 V311 H327 V422.7 H199.4 V311 H87.7 V183.4 H199.4 Z" fill="url(#pg)" stroke="#159615" stroke-width="16" stroke-linejoin="round"/><path d="M216 88 H310 M104 200 H199 M216 88 V183" stroke="#c8f9b4" stroke-width="9" fill="none" opacity=".85"/></svg>
<div class="t" style="position:absolute;top:630.19px;line-height:16px;font-size:11px;white-space:pre;color:#000;left:125.05px;transform-origin:0 50%;transform:scaleX(0.9551);">Adicionar</div>
<div class="btn" style="left:195px;top:624px;width:105px;height:27px"></div>
<svg style="left:194px;top:622px" width="60" height="30" viewBox="0 0 957 478"><defs><linearGradient id="ng" x1="0" y1="0" x2="1" y2="1"><stop offset="0" stop-color="#8df06a"/><stop offset="1" stop-color="#1fa01f"/></linearGradient><radialGradient id="nr" cx="40%" cy="35%" r="65%"><stop offset="0" stop-color="#ff7a5a"/><stop offset="1" stop-color="#c81e0a"/></radialGradient></defs><path d="M100 100 L305 82 L340 380 L120 420 Z" fill="#6a5a40" opacity=".3"/><path d="M88 92 L292 78 L326 372 L108 408 Z" fill="#fdfdff" stroke="#7d7dd0" stroke-width="12" stroke-linejoin="round"/><path d="M110 170 L300 150 M112 215 L305 195 M115 260 L310 240 M118 305 L314 285 M120 350 L318 330" stroke="#b8d4f8" stroke-width="9"/><path d="M158 120 L172 392" stroke="#f0685a" stroke-width="12"/><path d="M110 96 L290 82" stroke="#333" stroke-width="26" stroke-dasharray="14 12"/>
<path d="M205 312 L222 248 L268 292 Z" fill="#e8c890" stroke="#8a6a40" stroke-width="5"/><path d="M222 248 L338 126 L386 170 L268 292 Z" fill="url(#ng)" stroke="#1e8a1e" stroke-width="6"/><path d="M338 126 L352 112 L400 156 L386 170 Z" fill="#d8d8d8"/><circle cx="385" cy="112" r="50" fill="url(#nr)"/></svg>
<div class="t" style="position:absolute;top:630.19px;line-height:16px;font-size:11px;white-space:pre;color:#000;left:243.75px;transform-origin:0 50%;transform:scaleX(1.0307);">Alterar</div>
<div class="btn" style="left:308px;top:624px;width:104px;height:27px"></div>
<svg style="left:307px;top:622px" width="60" height="30" viewBox="0 0 957 478"><defs></defs><path d="M262 78 C330 70 385 70 402 92 C412 120 396 210 380 300" stroke="#a8a8a8" stroke-width="26" fill="none" stroke-linecap="round"/><path d="M206 100 L300 92 L322 140 L225 152 Z" fill="#35c82a"/><path d="M225 152 L322 140 L318 240 L240 250 Z" fill="#9ad8b0"/><path d="M165 168 L235 152 L262 262 L190 268 Z" fill="#f7a070"/><path d="M170 160 L232 146 L240 170 L178 182 Z" fill="#ff8a1e"/><path d="M115 162 L360 140 C356 200 330 262 300 292 L160 296 C130 262 116 210 115 162 Z" fill="#b4b4f0" opacity=".72" stroke="#a0a0e0" stroke-width="8"/><path d="M135 315 L390 290 L392 318 L250 350 L140 340 Z" fill="#b0b0b0" stroke="#8a8a8a" stroke-width="6"/><circle cx="152" cy="356" r="24" fill="#4a4a4a"/><circle cx="245" cy="388" r="26" fill="#4a4a4a"/><circle cx="358" cy="345" r="24" fill="#4a4a4a"/></svg>
<div class="t" style="position:absolute;top:630.19px;line-height:16px;font-size:11px;white-space:pre;color:#000;left:358.75px;transform-origin:0 50%;transform:scaleX(1.0524);">Ativar</div>
<div class="btn dis" style="left:420px;top:624px;width:92px;height:27px"></div>
<svg style="left:419px;top:622px" width="60" height="30" viewBox="0 0 957 478"><defs><linearGradient id="ug" x1="0" y1="0" x2="1" y2="1"><stop offset="0" stop-color="#c2c2c2"/><stop offset="1" stop-color="#8c8c8c"/></linearGradient></defs><path d="M92 198 L157 253 C207 158 287 103 347 108 C427 123 467 218 422 343 C417 258 377 188 317 193 C287 198 257 238 242 298 L307 308 L127 383 Z" fill="#8a8070" opacity=".3"/><path d="M85 190 L150 245 C200 150 280 95 340 100 C420 115 460 210 415 335 C410 250 370 180 310 185 C280 190 250 230 235 290 L300 300 L120 375 Z" fill="url(#ug)" stroke="#9a9a9a" stroke-width="6" stroke-linejoin="round"/></svg>
<div class="t" style="position:absolute;top:630.19px;line-height:16px;font-size:11px;white-space:pre;color:#b9adac;left:458.35px;transform-origin:0 50%;">Estornar</div>
<div class="btn" style="left:520px;top:624px;width:89px;height:27px"></div>
<svg style="left:519px;top:622px" width="60" height="30" viewBox="0 0 957 478"><defs><radialGradient id="cg" cx="38%" cy="30%" r="75%"><stop offset="0" stop-color="#ff7048"/><stop offset=".6" stop-color="#f0340e"/><stop offset="1" stop-color="#c82208"/></radialGradient></defs><circle cx="266" cy="248" r="176" fill="#6a5a40" opacity=".35"/><circle cx="258" cy="238" r="176" fill="url(#cg)" stroke="#c4260c" stroke-width="8"/><path d="M186 158 L332 322 M334 156 L166 314" stroke="#eaf4f8" stroke-width="50"/></svg>
<div class="t" style="position:absolute;top:630.19px;line-height:16px;font-size:11px;white-space:pre;color:#000;left:556.75px;transform-origin:0 50%;transform:scaleX(0.9630);">Cancelar</div>
<div class="btn" style="left:617px;top:624px;width:68px;height:27px"></div>
<svg style="left:626px;top:622px" width="60" height="30" viewBox="0 0 957 478"><defs><linearGradient id="rg" x1="0" y1="0" x2="1" y2="1"><stop offset="0" stop-color="#b8dcff"/><stop offset=".5" stop-color="#4aa0f5"/><stop offset="1" stop-color="#1e80ea"/></linearGradient></defs><g transform="translate(8,8)" fill="#6a5a40" opacity=".28"><path d="M270 150 C310 60 440 40 500 140 L555 115 L540 265 L400 220 L445 195 C410 130 330 110 270 150 Z"/><path d="M490 325 C460 420 330 440 265 350 L205 350 L225 215 L360 235 L320 280 C355 340 430 360 490 325 Z"/></g><g fill="url(#rg)" stroke="#1a78e0" stroke-width="10" stroke-linejoin="round"><path d="M270 150 C310 60 440 40 500 140 L555 115 L540 265 L400 220 L445 195 C410 130 330 110 270 150 Z"/><path d="M490 325 C460 420 330 440 265 350 L205 350 L225 215 L360 235 L320 280 C355 340 430 360 490 325 Z"/></g></svg>
<div class="btn" style="left:693px;top:625px;width:105px;height:27px"></div>
<svg style="left:692px;top:622px" width="60" height="30" viewBox="0 0 957 478"><defs></defs><path d="M130 165 L205 112 L440 132 L446 250 L352 322 L140 290 Z" fill="#22b01a"/><path d="M130 165 L205 112 L440 132 L352 196 Z" fill="#5fe04a"/><path d="M140 236 L352 262 L446 200 L446 212 L352 276 L140 250 Z" fill="#7af060"/><path d="M240 122 L322 128 L300 232 L236 224 Z" fill="#e6dce8"/><g stroke="#a87a06" stroke-width="9"><ellipse cx="282" cy="338" rx="56" ry="32" fill="#e8b820"/><ellipse cx="182" cy="255" rx="56" ry="27" fill="#f7d84a"/><ellipse cx="168" cy="308" rx="56" ry="28" fill="#e8b820"/><ellipse cx="162" cy="372" rx="66" ry="42" fill="#e2b018"/></g><ellipse cx="150" cy="360" rx="36" ry="18" fill="#fbe680"/></svg>
<div class="t" style="position:absolute;top:631.19px;line-height:16px;font-size:11px;white-space:pre;color:#000;left:729.95px;transform-origin:0 50%;transform:scaleX(1.0070);">Alt. Venctos</div>
<div class="btn" style="left:806px;top:624px;width:73px;height:27px"></div>
<svg style="left:805px;top:622px" width="60" height="30" viewBox="0 0 957 478"><defs><linearGradient id="fg" x1="0" y1="0" x2="1" y2="1"><stop offset="0" stop-color="#ffe748"/><stop offset="1" stop-color="#f5b600"/></linearGradient></defs><g transform="translate(9,9)" fill="#6a5a40" opacity=".35"><ellipse cx="180" cy="222" rx="66" ry="92" transform="rotate(14 180 222)"/><ellipse cx="360" cy="166" rx="66" ry="88" transform="rotate(14 360 166)"/></g><g fill="url(#fg)" stroke="#ad8200" stroke-width="13"><ellipse cx="180" cy="222" rx="66" ry="92" transform="rotate(14 180 222)"/><path d="M88 312 L190 348 C188 380 160 402 128 396 C96 388 80 352 88 312 Z"/><ellipse cx="360" cy="166" rx="66" ry="88" transform="rotate(14 360 166)"/><path d="M268 252 L372 288 C370 318 344 338 312 334 C278 326 260 292 268 252 Z"/></g></svg>
<div class="t" style="position:absolute;top:630.19px;line-height:16px;font-size:11px;white-space:pre;color:#000;left:846.45px;transform-origin:0 50%;transform:scaleX(0.9508);">Sair</div>
<div class="co" style="left:3px;top:65px;width:38px;height:38px"></div>
<div class="t" style="position:absolute;top:75.47px;line-height:16px;font-size:21px;white-space:pre;color:#000;font-weight:bold;-webkit-text-stroke:0;left:14.31px;transform-origin:50% 50%;">1</div>
<svg style="left:0;top:0" width="957" height="723"><path d="M48 78 L78.5 78" stroke="#000" stroke-width="2"/></svg>
<div class="co" style="left:917px;top:72px;width:38px;height:38px"></div>
<div class="t" style="position:absolute;top:82.72px;line-height:16px;font-size:21px;white-space:pre;color:#000;font-weight:bold;-webkit-text-stroke:0;left:929.51px;transform-origin:50% 50%;">2</div>
<svg style="left:0;top:0" width="957" height="723"><path d="M871 85.9 L909.7 84.9" stroke="#000" stroke-width="2"/></svg>
<div class="co" style="left:917px;top:117px;width:38px;height:37.5px"></div>
<div class="t" style="position:absolute;top:126.42px;line-height:16px;font-size:21px;white-space:pre;color:#000;font-weight:bold;-webkit-text-stroke:0;left:929.51px;transform-origin:50% 50%;">3</div>
<svg style="left:0;top:0" width="957" height="723"><path d="M871 130.1 L909.7 129.4" stroke="#000" stroke-width="2"/></svg>
<div class="co" style="left:184px;top:524px;width:38px;height:38px"></div>
<div class="t" style="position:absolute;top:534.37px;line-height:16px;font-size:21px;white-space:pre;color:#000;font-weight:bold;-webkit-text-stroke:0;left:196.06px;transform-origin:50% 50%;">4</div>
<svg style="left:0;top:0" width="957" height="723"><path d="M177 536.7 L138.6 588.3" stroke="#000" stroke-width="2"/></svg>
<svg style="left:0;top:0" width="957" height="723"><path d="M229 537.1 L254.4 590.5" stroke="#000" stroke-width="2"/></svg>
<div class="co" style="left:313px;top:524px;width:38px;height:38px"></div>
<div class="t" style="position:absolute;top:534.42px;line-height:16px;font-size:21px;white-space:pre;color:#000;font-weight:bold;-webkit-text-stroke:0;left:324.56px;transform-origin:50% 50%;">5</div>
<svg style="left:0;top:0" width="957" height="723"><path d="M357.7 537 L357.7 588.8" stroke="#000" stroke-width="2"/></svg>
<div class="co" style="left:424.7px;top:524px;width:38px;height:38px"></div>
<div class="t" style="position:absolute;top:534.42px;line-height:16px;font-size:21px;white-space:pre;color:#000;font-weight:bold;-webkit-text-stroke:0;left:437.26px;transform-origin:50% 50%;">6</div>
<svg style="left:0;top:0" width="957" height="723"><path d="M469.4 537 L469.4 588.8" stroke="#000" stroke-width="2"/></svg>
<div class="co" style="left:520px;top:524px;width:38px;height:38px"></div>
<div class="t" style="position:absolute;top:534.42px;line-height:16px;font-size:21px;white-space:pre;color:#000;font-weight:bold;-webkit-text-stroke:0;left:531.76px;transform-origin:50% 50%;">7</div>
<svg style="left:0;top:0" width="957" height="723"><path d="M564.3 537 L565.2 588.8" stroke="#000" stroke-width="2"/></svg>
<div class="co" style="left:610.2px;top:524px;width:38px;height:38px"></div>
<div class="t" style="position:absolute;top:534.42px;line-height:16px;font-size:21px;white-space:pre;color:#000;font-weight:bold;-webkit-text-stroke:0;left:622.16px;transform-origin:50% 50%;">8</div>
<svg style="left:0;top:0" width="957" height="723"><path d="M654.8 537 L655.2 588.8" stroke="#000" stroke-width="2"/></svg>
<div class="co" style="left:702.1px;top:524px;width:38px;height:38px"></div>
<div class="t" style="position:absolute;top:534.42px;line-height:16px;font-size:21px;white-space:pre;color:#000;font-weight:bold;-webkit-text-stroke:0;left:714.26px;transform-origin:50% 50%;">9</div>
<svg style="left:0;top:0" width="957" height="723"><path d="M746.9 537 L747.2 588.8" stroke="#000" stroke-width="2"/></svg>
<div class="co" style="left:81px;top:676px;width:49px;height:38px"></div>
<div class="t" style="position:absolute;top:686.47px;line-height:16px;font-size:21px;white-space:pre;color:#000;font-weight:bold;-webkit-text-stroke:0;left:93.77px;transform-origin:50% 50%;">10</div>
<svg style="left:0;top:0" width="957" height="723"><path d="M137.4 650.3 L137.0 688.6" stroke="#000" stroke-width="2"/></svg>
<div class="co" style="left:193.7px;top:676px;width:49px;height:38px"></div>
<div class="t" style="position:absolute;top:686.47px;line-height:16px;font-size:21px;white-space:pre;color:#000;font-weight:bold;-webkit-text-stroke:0;left:206.65px;transform-origin:50% 50%;">11</div>
<svg style="left:0;top:0" width="957" height="723"><path d="M249.9 650.3 L249.5 688.6" stroke="#000" stroke-width="2"/></svg>
<div class="co" style="left:308px;top:676px;width:49px;height:38px"></div>
<div class="t" style="position:absolute;top:686.47px;line-height:16px;font-size:21px;white-space:pre;color:#000;font-weight:bold;-webkit-text-stroke:0;left:321.07px;transform-origin:50% 50%;">12</div>
<svg style="left:0;top:0" width="957" height="723"><path d="M364 650.3 L363.6 688.6" stroke="#000" stroke-width="2"/></svg>
<div class="co" style="left:414.2px;top:676px;width:49px;height:38px"></div>
<div class="t" style="position:absolute;top:686.47px;line-height:16px;font-size:21px;white-space:pre;color:#000;font-weight:bold;-webkit-text-stroke:0;left:426.47px;transform-origin:50% 50%;">13</div>
<svg style="left:0;top:0" width="957" height="723"><path d="M470.6 650.3 L470.20000000000005 688.6" stroke="#000" stroke-width="2"/></svg>
<div class="co" style="left:511.7px;top:676px;width:49px;height:38px"></div>
<div class="t" style="position:absolute;top:686.47px;line-height:16px;font-size:21px;white-space:pre;color:#000;font-weight:bold;-webkit-text-stroke:0;left:523.97px;transform-origin:50% 50%;">14</div>
<svg style="left:0;top:0" width="957" height="723"><path d="M568 650.3 L567.6 688.6" stroke="#000" stroke-width="2"/></svg>
<div class="co" style="left:687px;top:676px;width:49px;height:38px"></div>
<div class="t" style="position:absolute;top:686.47px;line-height:16px;font-size:21px;white-space:pre;color:#000;font-weight:bold;-webkit-text-stroke:0;left:699.92px;transform-origin:50% 50%;">15</div>
<svg style="left:0;top:0" width="957" height="723"><path d="M743.3 650.3 L742.9 688.6" stroke="#000" stroke-width="2"/></svg>
</body></html>
